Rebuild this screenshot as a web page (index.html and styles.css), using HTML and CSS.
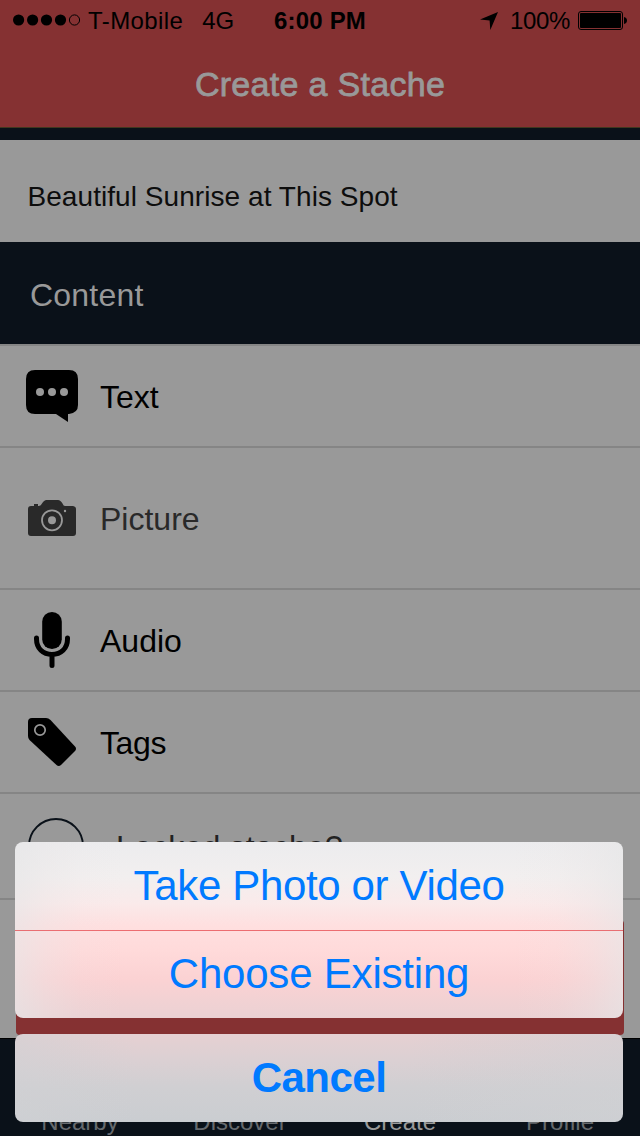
FILE: index.html
```html
<!DOCTYPE html>
<html lang="en">
<head>
<meta charset="utf-8">
<title>Create a Stache</title>
<link rel="stylesheet" href="styles.css">
</head>
<body>
<div class="app">
  <header class="nav">
    <div class="status">
      <div class="status-left">
        <svg class="signal" width="68" height="12" viewBox="0 0 68 12">
          <circle cx="5.6" cy="6" r="5.6"/><circle cx="19.6" cy="6" r="5.6"/><circle cx="33.5" cy="6" r="5.6"/><circle cx="47.5" cy="6" r="5.6"/>
          <circle cx="61.5" cy="6" r="5.1" fill="none" stroke="#000" stroke-width="1"/>
        </svg>
        <span class="carrier">T-Mobile</span>
        <span class="network">4G</span>
      </div>
      <span class="time">6:00 PM</span>
      <div class="status-right">
        <svg width="18" height="18" viewBox="0 0 18 18"><path d="M18 0 10.3 18 9.6 8.5 0 7.6Z"/></svg>
        <span class="percent">100%</span>
        <svg width="49" height="20" viewBox="0 0 49 20">
          <rect x=".5" y=".5" width="44" height="18" rx="2.5" fill="none" stroke="#000"/>
          <rect x="2" y="2" width="41" height="15" rx="1"/>
          <path d="M46 6c4 .5 4 6.500 0 7Z"/>
        </svg>
      </div>
    </div>
    <h1 class="title">Create a Stache</h1>
  </header>
  <div class="name-field">Beautiful Sunrise at This Spot</div>
  <h2 class="section">Content</h2>
  <ul class="list">
    <li class="row">
      <span class="icon"><svg width="52" height="52" viewBox="0 0 52 52">
        <path d="M9 0H43Q52 0 52 9V35Q52 43 43 44H42V52L30 44H9Q0 44 0 35V9Q0 0 9 0Z"/>
        <g fill="#999"><circle cx="14" cy="22" r="4"/><circle cx="26" cy="22" r="4"/><circle cx="38" cy="22" r="4"/></g>
      </svg></span>
      <span class="label">Text</span>
    </li>
    <li class="row row-picture">
      <span class="icon"><svg width="48" height="36" viewBox="0 0 48 36" fill="#292929">
        <path d="M3 6H6V4H10V6H11Q13 5.500 14 3.500Q16 0 18.500 0H30Q32.500 0 34.500 3.500Q35.500 6 37 6H45Q48 6.500 48 9V33Q48 36 45 36H3Q0 36 0 33V9Q0 6 3 6Z"/>
        <circle cx="24" cy="20.300" r="10" fill="none" stroke="#999" stroke-width="1.800"/>
        <circle cx="24" cy="20.300" r="4" fill="#999"/><circle cx="37" cy="11" r="1.200" fill="#999"/>
      </svg></span>
      <span class="label">Picture</span>
    </li>
    <li class="row">
      <span class="icon"><svg width="36" height="56" viewBox="0 0 36 56">
        <rect x="8.200" width="19.600" height="37" rx="9.800"/>
        <path d="M2.500 26V27C2.500 36.500 9 42.500 18 42.500S33.500 36.500 33.500 27V26M18 43V53.500" fill="none" stroke="#000" stroke-width="5" stroke-linecap="round"/>
      </svg></span>
      <span class="label">Audio</span>
    </li>
    <li class="row">
      <span class="icon"><svg width="48" height="48" viewBox="0 0 48 48">
        <path d="M4 0H18Q20.500 0 22.500 2L47 28.500Q49 30.700 47 33L33 47Q30.700 49 28.500 47L1.500 22Q0 20.500 0 18V4Q0 0 4 0Z"/>
        <circle cx="12" cy="12" r="5.200" fill="none" stroke="#999" stroke-width="1.700"/>
      </svg></span>
      <span class="label tags">Tags</span>
    </li>
    <li class="row row-locked">
      <span class="check"></span>
      <span class="label">Locked stache?</span>
    </li>
    <li class="submit"><span class="submit-button"></span></li>
  </ul>
  <footer class="tabs">
    <span>Nearby</span><span>Discover</span><span class="active">Create</span><span>Profile</span>
  </footer>
  <div class="sheet">
    <div class="options">
      <div class="option">Take Photo or Video</div>
      <div class="option choose">Choose Existing</div>
    </div>
    <div class="option cancel">Cancel</div>
  </div>
</div>
</body>
</html>
```
FILE: styles.css
```css
* { box-sizing: border-box; }
body { margin: 0; font-family: "Liberation Sans", Arial, sans-serif; color: #000; }
h1, h2, ul { margin: 0; padding: 0; font-weight: 400; list-style: none; }
svg { display: block; flex: none; }
.app { position: relative; width: 640px; height: 1136px; overflow: hidden; background: #0a1119; display: flex; flex-direction: column; }
.nav { height: 128px; background: #853132; border-bottom: 1px solid #40371f; flex: none; }
.status { display: grid; grid-template-columns: 240px 160px 240px; height: 40px; align-items: center; font-size: 24px; line-height: 38px; padding-top: 2px; }
.status-left { display: flex; align-items: center; padding-left: 13px; }
.signal { margin-top: -2px; }
.carrier { margin-left: 7px; letter-spacing: .4px; }
.network { margin-left: 19px; letter-spacing: -.2px; }
.time { text-align: center; font-weight: 700; letter-spacing: .2px; }
.status-right { display: flex; align-items: center; padding-left: 80px; }
.percent { margin: 0 8px 0 12px; letter-spacing: -.35px; width: 60px; white-space: nowrap; }
.title { text-align: center; font-size: 34px; line-height: 40px; padding-top: 24px; letter-spacing: .3px; color: #999; -webkit-text-stroke: .8px #999; }
.name-field { margin-top: 12px; height: 102px; flex: none; background: #999; padding: 41px 0 0 27.5px; font-size: 28px; line-height: 32px; letter-spacing: .06px; color: #0d0d0d; }
.section { height: 102px; flex: none; padding-left: 30px; font-size: 32px; line-height: 106px; letter-spacing: .2px; color: #999; }
.list { flex: none; background: #999; }
.row { height: 102px; border-top: 2px solid #858585; display: flex; align-items: center; font-size: 32px; }
.row-picture { height: 142px; color: #292929; }
.row-locked { height: 106px; color: #222; padding-left: 28px; letter-spacing: .2px; }
.icon { width: 52px; margin: 0 22px 0 26px; display: flex; justify-content: center; }
.label { padding-top: 2px; }
.tags { letter-spacing: -.4px; }
.check { width: 56px; height: 56px; border: 2px solid #0a1119; border-radius: 50%; margin-right: 32px; }
.submit { height: 140px; border-top: 2px solid #858585; padding: 20px 16px 0; }
.submit-button { display: block; height: 115px; border-radius: 4px; background: #853132; }
.tabs { flex: 1; border-top: 1px solid #000; display: grid; grid-template-columns: repeat(4, 1fr); align-items: end; text-align: center; font-size: 24px; line-height: 28px; color: #666a6e; }
.tabs .active { color: #999; }
.sheet { position: absolute; left: 15px; top: 842px; width: 608px; display: flex; flex-direction: column; gap: 16px; }
.options { height: 176px; border-radius: 8px; overflow: hidden; background: linear-gradient(90deg, rgba(230,230,231,.65), rgba(232,229,230,.36) 5%, rgba(234,229,230,.1) 11%, rgba(234,229,230,0) 18%, rgba(234,229,230,0) 82%, rgba(234,229,230,.1) 89%, rgba(232,229,230,.36) 95%, rgba(230,230,231,.65)), linear-gradient(#ececee, #f2efef 20%, #faeaea 35%, #ffdfdf 48%, #ffdada 62%, #fbd2d3 78%, #ead1d3); }
.option { height: 88px; text-align: center; line-height: 88px; font-size: 42px; letter-spacing: -.35px; color: #007aff; }
.choose { border-top: 1px solid rgba(228,65,70,.72); line-height: 85px; letter-spacing: -.2px; }
.cancel { border-radius: 8px; font-weight: 700; letter-spacing: -.5px; background: linear-gradient(90deg, rgba(208,209,212,.6), rgba(208,209,212,0) 20%, rgba(208,209,212,0) 65%, rgba(208,209,212,.6)), linear-gradient(#e6d0d2, #dbd0d3 30%, #d0cfd2 60%, #cacdd1); }
```
